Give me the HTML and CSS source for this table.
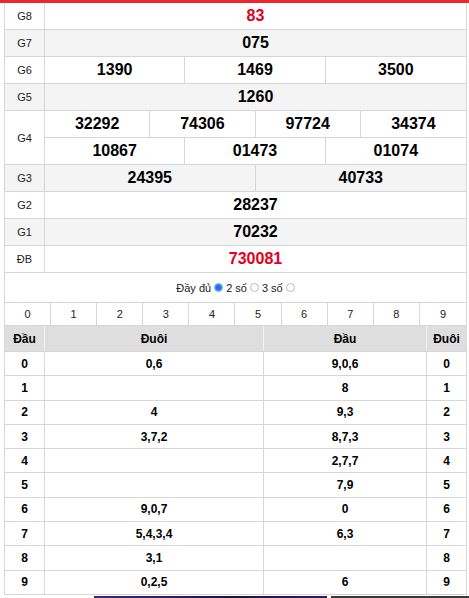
FILE: index.html
```html
<!DOCTYPE html>
<html lang="vi">
<head>
<meta charset="utf-8">
<title>KQ</title>
<link rel="stylesheet" href="styles.css">
</head>
<body>
<div class="topbar"></div>
<div class="wrap">
  <div class="prizes">
    <div class="prow">
      <div class="plabel">G8</div>
      <div class="vals c1"><div class="num red">83</div></div>
    </div>
    <div class="prow alt">
      <div class="plabel">G7</div>
      <div class="vals c1"><div class="num">075</div></div>
    </div>
    <div class="prow">
      <div class="plabel">G6</div>
      <div class="vals c3"><div class="num">1390</div><div class="num">1469</div><div class="num">3500</div></div>
    </div>
    <div class="prow alt">
      <div class="plabel">G5</div>
      <div class="vals c1"><div class="num">1260</div></div>
    </div>
    <div class="prow tall">
      <div class="plabel">G4</div>
      <div class="stack">
        <div class="vals c4 sub"><div class="num">32292</div><div class="num">74306</div><div class="num">97724</div><div class="num">34374</div></div>
        <div class="vals c3"><div class="num">10867</div><div class="num">01473</div><div class="num">01074</div></div>
      </div>
    </div>
    <div class="prow alt">
      <div class="plabel">G3</div>
      <div class="vals c2"><div class="num">24395</div><div class="num">40733</div></div>
    </div>
    <div class="prow">
      <div class="plabel">G2</div>
      <div class="vals c1"><div class="num">28237</div></div>
    </div>
    <div class="prow alt">
      <div class="plabel">G1</div>
      <div class="vals c1"><div class="num">70232</div></div>
    </div>
    <div class="prow">
      <div class="plabel">ĐB</div>
      <div class="vals c1"><div class="num red">730081</div></div>
    </div>
  </div>

  <div class="opts">
    <span>Đầy đủ</span><span class="radio on"></span><span>2 số</span><span class="radio"></span><span>3 số</span><span class="radio"></span>
  </div>

  <div class="digits">
    <div>0</div><div>1</div><div>2</div><div>3</div><div>4</div><div>5</div><div>6</div><div>7</div><div>8</div><div>9</div>
  </div>

  <div class="lt">
    <div class="lrow head"><div>Đầu</div><div>Đuôi</div><div>Đầu</div><div>Đuôi</div></div>
    <div class="lrow"><div>0</div><div>0,6</div><div>9,0,6</div><div>0</div></div>
    <div class="lrow"><div>1</div><div></div><div>8</div><div>1</div></div>
    <div class="lrow"><div>2</div><div>4</div><div>9,3</div><div>2</div></div>
    <div class="lrow"><div>3</div><div>3,7,2</div><div>8,7,3</div><div>3</div></div>
    <div class="lrow"><div>4</div><div></div><div>2,7,7</div><div>4</div></div>
    <div class="lrow"><div>5</div><div></div><div>7,9</div><div>5</div></div>
    <div class="lrow"><div>6</div><div>9,0,7</div><div>0</div><div>6</div></div>
    <div class="lrow"><div>7</div><div>5,4,3,4</div><div>6,3</div><div>7</div></div>
    <div class="lrow"><div>8</div><div>3,1</div><div></div><div>8</div></div>
    <div class="lrow"><div>9</div><div>0,2,5</div><div>6</div><div>9</div></div>
  </div>
</div>
<div class="banner"><div class="b1"></div><div class="b2"></div></div>
</body>
</html>
```
FILE: styles.css
```css
* { box-sizing: border-box; }
html, body { margin: 0; padding: 0; background: #fff; }
body {
  font-family: "Liberation Sans", Arial, sans-serif;
  color: #000;
  overflow: hidden;
}
.topbar { height: 3px; background: #f0262d; }
.wrap {
  margin: 0 2px 0 4px;
  border-left: 1px solid #d6d6d6;
  border-right: 1px solid #d6d6d6;
}
.prow {
  display: flex;
  height: 27px;
  border-bottom: 1px solid #d6d6d6;
  background: #fff;
}
.prow.alt { background: #f4f4f4; }
.prow.tall { height: 54px; }
.plabel {
  width: 40px;
  flex: none;
  border-right: 1px solid #d6d6d6;
  display: flex;
  align-items: center;
  justify-content: center;
  font-size: 11px;
  color: #222;
}
.stack { flex: 1; display: flex; flex-direction: column; }
.vals { flex: 1; display: grid; }
.vals.sub { border-bottom: 1px solid #d6d6d6; flex: none; height: 27px; }
.stack .vals:last-child { height: 26px; flex: none; }
.c1 { grid-template-columns: 1fr; }
.c2 { grid-template-columns: repeat(2, 1fr); }
.c3 { grid-template-columns: repeat(3, 1fr); }
.c4 { grid-template-columns: repeat(4, 1fr); }
.num {
  display: flex;
  align-items: center;
  justify-content: center;
  font-size: 16px;
  font-weight: bold;
  border-right: 1px solid #d6d6d6;
}
.num:last-child { border-right: none; }
.num.red { color: #e3001b; font-weight: bold; }

.opts {
  height: 29px;
  display: flex;
  align-items: center;
  justify-content: center;
  gap: 2px;
  font-size: 11px;
  color: #222;
  padding-left: 1px;
}
.radio {
  width: 9px;
  height: 9px;
  border-radius: 50%;
  border: 1px solid #bdbdbd;
  background: #fff;
  display: inline-block;
  margin: 0 1px;
}
.radio.on {
  border: 1px solid #8fb8f2;
  background: #1a73e8;
  box-shadow: inset 0 0 0 1px #4a90ef;
}

.digits {
  display: grid;
  grid-template-columns: repeat(10, 1fr);
  border-top: 1px solid #d6d6d6;
  border-bottom: 1px solid #d6d6d6;
  height: 24px;
}
.digits div {
  display: flex;
  align-items: center;
  justify-content: center;
  font-size: 11px;
  color: #222;
  border-right: 1px solid #d6d6d6;
}
.digits div:last-child { border-right: none; }

.lrow {
  display: grid;
  grid-template-columns: 40px 219px 163px 1fr;
  height: 24.3px;
  border-bottom: 1px solid #d6d6d6;
}
.lrow.head { height: 26px; background: #dedede; }
.lrow div {
  display: flex;
  align-items: center;
  justify-content: center;
  font-size: 12px;
  font-weight: bold;
  border-right: 1px solid #d6d6d6;
}
.lrow div:last-child { border-right: none; }
.lrow.head div { border-right: 1px solid #f2f2f2; }
.lrow.head div:last-child { border-right: none; }

.banner {
  display: flex;
  margin: 1px 0 0 94px;
  height: 12px;
  gap: 4px;
}
.b1 { width: 233px; background: linear-gradient(90deg, #3b2a7a, #1c1446 60%, #2b1d5c); }
.b2 { flex: 1; background: #3a3a3a; }
```
